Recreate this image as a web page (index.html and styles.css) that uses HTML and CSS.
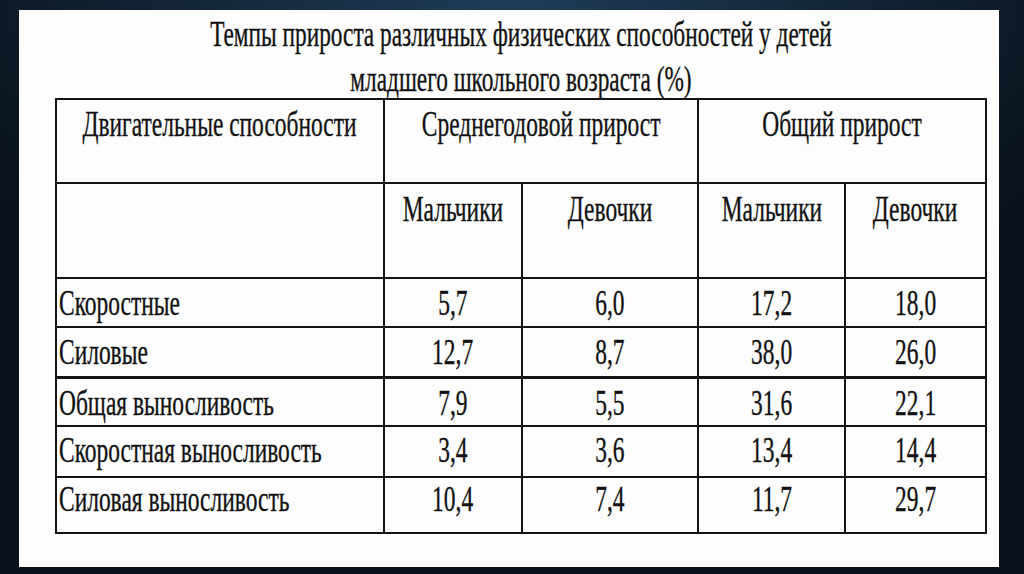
FILE: index.html
```html
<!DOCTYPE html>
<html lang="ru">
<head>
<meta charset="utf-8">
<title>Темпы прироста</title>
<link rel="stylesheet" href="styles.css">
</head>
<body>
<div class="slide">
  <div class="sheet">
    <div class="title"><span>Темпы прироста различных физических способностей у детей<br>младшего школьного возраста (%)</span></div>
    <table class="grid">
      <colgroup>
        <col class="c1"><col class="c2"><col class="c3"><col class="c4"><col class="c5">
      </colgroup>
      <tr class="h1">
        <td><div class="mid"><span class="t">Двигательные способности</span></div></td>
        <td colspan="2"><div class="mid"><span class="t">Среднегодовой прирост</span></div></td>
        <td colspan="2"><div class="mid"><span class="t">Общий прирост</span></div></td>
      </tr>
      <tr class="h2">
        <td></td>
        <td><div class="mid"><span class="t">Мальчики</span></div></td>
        <td><div class="mid"><span class="t">Девочки</span></div></td>
        <td><div class="mid"><span class="t">Мальчики</span></div></td>
        <td><div class="mid"><span class="t">Девочки</span></div></td>
      </tr>
      <tr class="r1">
        <td><div class="lft"><span class="t">Скоростные</span></div></td>
        <td><div class="mid"><span class="t">5,7</span></div></td>
        <td><div class="mid"><span class="t">6,0</span></div></td>
        <td><div class="mid"><span class="t">17,2</span></div></td>
        <td><div class="mid"><span class="t">18,0</span></div></td>
      </tr>
      <tr class="r2">
        <td><div class="lft"><span class="t">Силовые</span></div></td>
        <td><div class="mid"><span class="t">12,7</span></div></td>
        <td><div class="mid"><span class="t">8,7</span></div></td>
        <td><div class="mid"><span class="t">38,0</span></div></td>
        <td><div class="mid"><span class="t">26,0</span></div></td>
      </tr>
      <tr class="r3">
        <td><div class="lft"><span class="t">Общая выносливость</span></div></td>
        <td><div class="mid"><span class="t">7,9</span></div></td>
        <td><div class="mid"><span class="t">5,5</span></div></td>
        <td><div class="mid"><span class="t">31,6</span></div></td>
        <td><div class="mid"><span class="t">22,1</span></div></td>
      </tr>
      <tr class="r4">
        <td><div class="lft"><span class="t">Скоростная выносливость</span></div></td>
        <td><div class="mid"><span class="t">3,4</span></div></td>
        <td><div class="mid"><span class="t">3,6</span></div></td>
        <td><div class="mid"><span class="t">13,4</span></div></td>
        <td><div class="mid"><span class="t">14,4</span></div></td>
      </tr>
      <tr class="r5">
        <td><div class="lft"><span class="t">Силовая выносливость</span></div></td>
        <td><div class="mid"><span class="t">10,4</span></div></td>
        <td><div class="mid"><span class="t">7,4</span></div></td>
        <td><div class="mid"><span class="t">11,7</span></div></td>
        <td><div class="mid"><span class="t">29,7</span></div></td>
      </tr>
    </table>
  </div>
</div>
</body>
</html>
```

FILE: styles.css
```css
html, body {
  margin: 0;
  padding: 0;
}
body {
  width: 1024px;
  height: 574px;
  overflow: hidden;
  background: radial-gradient(ellipse 70% 60% at 50% 0%, #1f3c58 0%, #132638 45%, #0b1520 80%, #08111a 100%);
  font-family: "Liberation Serif", "Times New Roman", serif;
  color: #121212;
  -webkit-text-stroke: 0.35px #121212;
}
.slide {
  padding: 10px 25px 7px 19px;
}
.sheet {
  width: 944px;
  height: 555px;
  background: #fdfdfd;
  padding: 2px 0 0 36px;
}
.title {
  width: 929px;
  font-size: 35px;
  line-height: 45px;
  text-align: center;
  transform: scaleX(0.666);
  transform-origin: 50% 50%;
  white-space: nowrap;
  margin-bottom: -4px;
}
.title span {
  display: inline-block;
}
.grid {
  border-collapse: collapse;
  table-layout: fixed;
  width: 930px;
  font-size: 35px;
  line-height: 40px;
}
.c1 { width: 328px; }
.c2 { width: 138px; }
.c3 { width: 176px; }
.c4 { width: 147px; }
.c5 { width: 141px; }
.grid td {
  border: 2.5px solid #141414;
  padding: 5px 2px 0 2px;
  vertical-align: top;
  white-space: nowrap;
  overflow: visible;
}
.h1 { height: 84px; }
.h2 { height: 95px; }
.h2 td { padding-top: 6px; }
.r1 { height: 49px; }
.r2 { height: 50px; }
.r3 { height: 49px; }
.r4 { height: 51px; }
.r5 { height: 56px; }
.r3 td { border-top-width: 3.5px; }
.r4 td { padding-top: 4px; }
.r5 td { padding-top: 2px; }
.mid {
  display: flex;
  justify-content: center;
}
.lft {
  display: flex;
  justify-content: flex-start;
}
.t {
  display: inline-block;
  transform: scaleX(0.67);
  transform-origin: 50% 50%;
  flex: none;
}
.lft .t {
  transform-origin: 0 50%;
}
```
